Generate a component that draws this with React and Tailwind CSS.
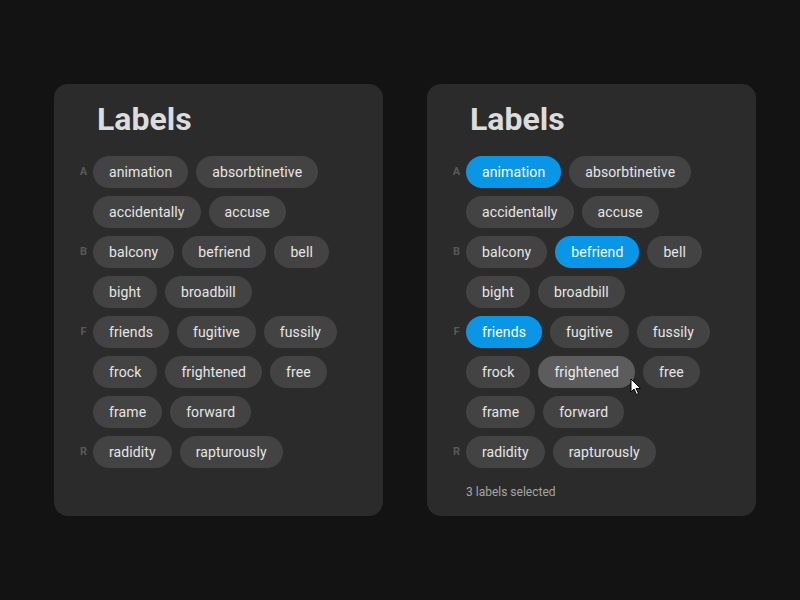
import React from 'react';

const groups = [
  { letter: 'A', labels: ['animation', 'absorbtinetive', 'accidentally', 'accuse'] },
  { letter: 'B', labels: ['balcony', 'befriend', 'bell', 'bight', 'broadbill'] },
  { letter: 'F', labels: ['friends', 'fugitive', 'fussily', 'frock', 'frightened', 'free', 'frame', 'forward'] },
  { letter: 'R', labels: ['radidity', 'rapturously'] },
];

const Cursor = () => (
  <svg width="12" height="18" viewBox="0 0 12 18" className="absolute right-[-7px] top-[22px]">
    <path d="M1 1 L1 14 L4 11 L6.5 16.5 L8.5 15.5 L6 10.5 L10.5 10.5 Z" fill="#fff" stroke="#000" strokeWidth="1" strokeLinejoin="round" />
  </svg>
);

function Chip({ label, selected, hover }) {
  let cls = 'bg-[#434343] text-[#e6e6e6]';
  if (selected) cls = 'bg-[#0a96e6] text-white';
  else if (hover) cls = 'bg-[#5c5c5c] text-[#ececec]';
  return (
    <div className={`relative h-8 px-4 rounded-full flex items-center text-[14px] tracking-[0.1px] ${cls}`}>
      {label}
      {hover && <Cursor />}
    </div>
  );
}

function LabelsCard({ selected = [], hover, footer }) {
  return (
    <div className="w-[329px] rounded-[14px] bg-[#2b2b2b] pt-[15px] pb-[15px] pl-[20px] pr-[36px] flex flex-col">
      <h1 className="text-[32px] leading-[40px] font-bold text-[#dcdcdc] pl-[23px] mb-[17px]">Labels</h1>
      <div className="flex flex-col gap-2">
        {groups.map((g) => (
          <div key={g.letter} className="flex">
            <div className="w-[19px] h-8 flex items-center justify-center text-[11px] font-bold text-[#595959]">
              {g.letter}
            </div>
            <div className="flex-1 flex flex-wrap gap-2">
              {g.labels.map((l) => (
                <Chip key={l} label={l} selected={selected.includes(l)} hover={hover === l} />
              ))}
            </div>
          </div>
        ))}
      </div>
      {footer && <p className="mt-[15px] pl-[19px] text-[12px] text-[#a6a6a6]">{footer}</p>}
    </div>
  );
}

export default function App() {
  return (
    <div className="w-[800px] h-[600px] bg-[#131313] flex items-start pl-[54px] pt-[84px]" style={{ fontFamily: 'Roboto, sans-serif' }}>
      <div className="flex gap-[44px] items-stretch">
        <LabelsCard />
        <LabelsCard selected={['animation', 'befriend', 'friends']} hover="frightened" footer="3 labels selected" />
      </div>
    </div>
  );
}
